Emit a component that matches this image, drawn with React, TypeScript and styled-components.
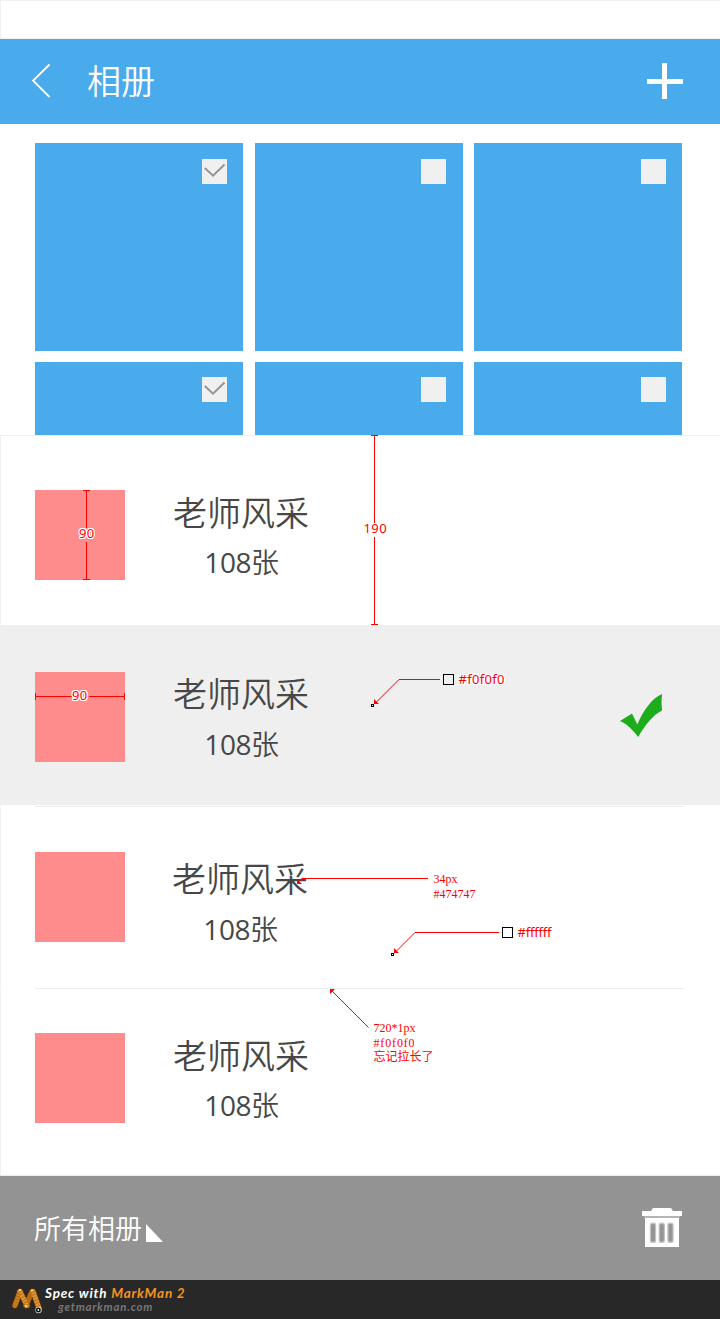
import React from "react";
import styled, { createGlobalStyle } from "styled-components";

const GlobalStyle = createGlobalStyle`
  * { box-sizing: border-box; }
  body { margin: 0; background: #ffffff; }
`;

const BLUE = "#49abeb";
const LINE = "#f0f0f0";
const RED = "#ff0000";

const Page = styled.main`
  position: relative;
  width: 720px;
  height: 1319px;
  overflow: hidden;
  display: flex;
  flex-direction: column;
  font-family: "Noto Sans", "Noto Sans CJK SC", sans-serif;
  color: #474747;
`;

const StatusBar = styled.div`
  flex: none;
  height: 39px;
  border: 1px solid ${LINE};
  border-right: none;
`;

const Header = styled.header`
  flex: none;
  height: 85px;
  padding: 0 37px 1px 32px;
  display: flex;
  align-items: center;
  background: ${BLUE};
`;

const HeaderTitle = styled.h1`
  margin: 0 auto 3px 36px;
  font-family: "Noto Sans CJK SC", sans-serif;
  font-size: 34px;
  line-height: 50px;
  font-weight: 350;
  color: #ffffff;
`;

const Gallery = styled.section`
  flex: none;
  height: 311px;
  overflow: hidden;
  padding: 19px 38px 0 35px;
  display: grid;
  grid-template-columns: 208px 208px 208px;
  grid-auto-rows: 208px;
  justify-content: space-between;
  row-gap: 11px;
`;

const Tile = styled.div<{ $top: number; $right: number }>`
  display: flex;
  justify-content: flex-end;
  align-items: flex-start;
  padding: ${(p) => p.$top}px ${(p) => p.$right}px 0 0;
  background: ${BLUE};
`;

const CheckBox = styled.span`
  width: 25px;
  height: 25px;
  background: ${LINE};
  svg { display: block; }
`;

const AlbumList = styled.section`
  flex: none;
  height: 741px;
  display: flex;
  flex-direction: column;
  border-bottom: 1px solid #ebebeb;
`;

const AlbumRow = styled.article<{ $height: number; $selected?: boolean; $topLine?: boolean }>`
  flex: none;
  height: ${(p) => p.$height}px;
  display: flex;
  align-items: flex-start;
  padding-left: ${(p) => (p.$selected ? 35 : 34)}px;
  background: ${(p) => (p.$selected ? "#efefef" : "#ffffff")};
  border-left: ${(p) => (p.$selected ? "none" : `1px solid ${LINE}`)};
  box-shadow: ${(p) => (p.$topLine ? `inset 0 1px 0 ${LINE}` : "none")};
`;

const Divider = styled.div`
  flex: none;
  height: 1px;
  margin: 0 36px 0 35px;
  background: #ececec;
`;

const Thumb = styled.div<{ $top: number }>`
  flex: none;
  width: 90px;
  height: 90px;
  margin-top: ${(p) => p.$top}px;
  background: #ff8c8c;
`;

const AlbumText = styled.div<{ $top: number; $left: number }>`
  width: 136px;
  margin: ${(p) => p.$top}px 0 0 ${(p) => p.$left}px;
  text-align: center;
`;

const AlbumName = styled.h2`
  margin: 0;
  font-size: 34px;
  line-height: 50px;
  font-weight: 350;
  white-space: nowrap;
`;

const AlbumCount = styled.p<{ $height: number }>`
  margin: -1px 0 0 1px;
  font-size: 28px;
  font-weight: 350;
  line-height: ${(p) => p.$height}px;
  letter-spacing: -0.4px;
`;

const CountNumber = styled.span`
  font-family: "Open Sans", "Noto Sans", sans-serif;
  font-weight: 400;
`;

const SelectedMark = styled.div`
  margin: 69px 57px 0 auto;
  svg { display: block; }
`;

const Toolbar = styled.footer`
  flex: none;
  height: 104px;
  padding: 0 38px 1px 34px;
  display: flex;
  align-items: center;
  background: #939393;
`;

const AlbumPicker = styled.div`
  display: flex;
  align-items: flex-end;
  margin-right: auto;
  font-family: "Noto Sans CJK SC", sans-serif;
  font-size: 27px;
  line-height: 40px;
  font-weight: 350;
  color: #ffffff;
  svg { margin: 0 0 6px 4px; }
`;

const Brand = styled.div`
  flex: none;
  height: 39px;
  display: flex;
  padding-left: 11px;
  background: #282828;
  font-family: Lato, "Open Sans", sans-serif;
  font-style: italic;
  font-weight: 700;
`;

const BrandText = styled.div`
  margin: 7px 0 0 2px;
`;

const BrandName = styled.div`
  font-size: 13.5px;
  line-height: 13px;
  letter-spacing: 0.8px;
  white-space: nowrap;
  color: #ffffff;
  em { color: #f7941d; }
`;

const BrandSite = styled.div`
  margin-left: 13px;
  font-size: 11.5px;
  line-height: 13px;
  letter-spacing: 0.75px;
  color: #777777;
`;

const Overlay = styled.div`
  position: absolute;
  inset: 0;
  pointer-events: none;
  > svg { display: block; }
`;

const Measure = styled.span<{ $x: number; $y: number; $spacing?: number }>`
  position: absolute;
  left: ${(p) => p.$x}px;
  top: ${(p) => p.$y}px;
  font-family: "Noto Sans", sans-serif;
  font-size: 13px;
  line-height: 16px;
  letter-spacing: ${(p) => p.$spacing ?? 0}px;
  color: ${RED};
  text-shadow: 1px 0 #fff, -1px 0 #fff, 0 1px #fff, 0 -1px #fff, 1px 1px #fff, -1px -1px #fff, 1px -1px #fff, -1px 1px #fff;
`;

const Note = styled.div<{ $x: number; $y: number }>`
  position: absolute;
  left: ${(p) => p.$x}px;
  top: ${(p) => p.$y}px;
  font-family: "Liberation Serif", "Noto Sans CJK SC", serif;
  font-size: 12px;
  line-height: 14.5px;
  white-space: nowrap;
  color: ${RED};
`;

const NoteLine = styled.div<{ $spacing?: number }>`
  height: 14.5px;
  letter-spacing: ${(p) => p.$spacing ?? 0}px;
`;

const tiles = [
  { checked: true, top: 16, right: 16 },
  { checked: false, top: 16, right: 17 },
  { checked: false, top: 16, right: 16 },
  { checked: true, top: 15, right: 16 },
  { checked: false, top: 15, right: 17 },
  { checked: false, top: 15, right: 16 },
];

interface Album {
  height: number;
  thumbTop: number;
  textTop: number;
  textLeft: number;
  countHeight: number;
  selected?: boolean;
  topLine?: boolean;
  dividerBefore?: boolean;
}

const albums: Album[] = [
  { height: 190, thumbTop: 55, textTop: 53, textLeft: 48, countHeight: 50, topLine: true },
  { height: 180, thumbTop: 47, textTop: 44, textLeft: 48, countHeight: 52, selected: true },
  { height: 181, thumbTop: 45, textTop: 47, textLeft: 47, countHeight: 52, dividerBefore: true },
  { height: 186, thumbTop: 44, textTop: 42, textLeft: 48, countHeight: 50, dividerBefore: true },
];

const TickIcon = () => (
  <svg width="25" height="25" fill="none" stroke="#959595" strokeWidth="2">
    <path d="M2.8 9 L11 16.7 L22.5 5.5" />
  </svg>
);

const BrandLogo = () => (
  <svg width="32" height="39" fill="none" strokeLinecap="round">
    <path d="M4 25.5 L9 11.5 M9 11.5 L16 25.5 M15 25.5 L21 11.5 M22 11.5 L28 28" stroke="#5b2f08" strokeWidth="6.5" />
    <path d="M4 25.5 L9 11.5" stroke="#c9801c" strokeWidth="5" />
    <path d="M15 25.5 L21 11.5" stroke="#b86f14" strokeWidth="5" />
    <path d="M9 11.5 L16 25.5 M22 11.5 L28 28" stroke="#dc9430" strokeWidth="5" />
    <path d="M9 11.5 L16 25.5 M22 11.5 L28 28 M4 25.5 L9 11.5 M15 25.5 L21 11.5" stroke="#a5621a" strokeWidth="5" strokeDasharray="0.6 2.4" strokeLinecap="butt" />
    <g fill="#ffe27a">
      <circle cx="9" cy="10" r="1.1" />
      <circle cx="21" cy="10.5" r="1.1" />
      <circle cx="15" cy="26" r="1.1" />
    </g>
    <circle cx="27.5" cy="30" r="3.2" fill="#e4e4e4" />
    <circle cx="27.3" cy="30.1" r="2.5" fill="#111111" />
    <circle cx="27.3" cy="30" r="0.9" fill="#ffffff" />
  </svg>
);

const App = () => (
  <>
    <GlobalStyle />
    <Page>
      <StatusBar />
      <Header>
        <svg width="19" height="36" fill="none" stroke="#fff" strokeWidth="1.8">
          <path d="M17.5 1.5 L1.2 17.7 L17.5 34" />
        </svg>
        <HeaderTitle>相册</HeaderTitle>
        <svg width="36" height="36" fill="#fff" shapeRendering="crispEdges">
          <path d="M15 0h5v16h16v5H20v15h-5V21H0v-5h15z" />
        </svg>
      </Header>
      <Gallery>
        {tiles.map((t, i) => (
          <Tile key={i} $top={t.top} $right={t.right}>
            <CheckBox>{t.checked && <TickIcon />}</CheckBox>
          </Tile>
        ))}
      </Gallery>
      <AlbumList>
        {albums.map((a, i) => (
          <React.Fragment key={i}>
            {i === 2 && <AlbumRow as="div" $height={1} />}
            {a.dividerBefore && <Divider />}
            <AlbumRow $height={a.height} $selected={a.selected} $topLine={a.topLine}>
              <Thumb $top={a.thumbTop} />
              <AlbumText $top={a.textTop} $left={a.textLeft}>
                <AlbumName>老师风采</AlbumName>
                <AlbumCount $height={a.countHeight}>
                  <CountNumber>108</CountNumber>张
                </AlbumCount>
              </AlbumText>
              {a.selected && (
                <SelectedMark>
                  <svg width="43" height="44" fill="#1cac1c">
                    <path d="M0 27 L12 19.5 L17.3 30.5 C23 17 32 4 42 0 L41.5 8 L42 16.5 C33 21 25 31 18.2 43 C13 36 7 30 0 27Z" />
                  </svg>
                </SelectedMark>
              )}
            </AlbumRow>
          </React.Fragment>
        ))}
      </AlbumList>
      <Toolbar>
        <AlbumPicker>
          所有相册
          <svg width="17" height="18" fill="#fff">
            <path d="M0 0 L17 18 H0Z" />
          </svg>
        </AlbumPicker>
        <svg width="40" height="39">
          <path d="M11 0H29L31 3H40V8H0V3H9Z" fill="#fff" />
          <path d="M3 10H37V39H3Z" fill="#fff" />
          <path d="M2 9H38" stroke="#b5b5b5" strokeWidth="2" />
          <g fill="#c4c4c4">
            <rect x="7.8" y="14.5" width="6.4" height="20.5" rx="2.5" />
            <rect x="16.6" y="14.5" width="6.4" height="20.5" rx="2.5" />
            <rect x="25.3" y="14.5" width="6.4" height="20.5" rx="2.5" />
          </g>
          <g fill="#959595">
            <rect x="9" y="16" width="4" height="17.5" rx="1.5" />
            <rect x="17.8" y="16" width="4" height="17.5" rx="1.5" />
            <rect x="26.5" y="16" width="4" height="17.5" rx="1.5" />
          </g>
        </svg>
      </Toolbar>
      <Brand>
        <BrandLogo />
        <BrandText>
          <BrandName>Spec with <em>MarkMan 2</em></BrandName>
          <BrandSite>getmarkman.com</BrandSite>
        </BrandText>
      </Brand>

      <Overlay>
        <svg width="720" height="1319" fill="none" stroke={RED}>
          <g shapeRendering="crispEdges">
            <path d="M83 490.5H90 M83 579.5H90 M86.5 490V528 M86.5 542V580" />
            <path d="M371 435.5H378 M371 624.5H378 M374.5 435V523 M374.5 537V625" />
            <path d="M35.5 693V700 M124.5 693V700 M35 696.5H72 M89 696.5H125" />
            <path d="M399 679.5H440 M415 932.5H499 M302 878.5H428" />
          </g>
          <path d="M399 679.5L375 703.5 M415 932.5L395 952.5 M332 991L368.5 1027.5 M302 878.5L298 882" strokeWidth="1" />
          <g fill={RED} stroke="none">
            <path d="M374 699V704H379Z M394 948V953H399Z M330 989H335L330 994Z M297 879V884H302Z" />
          </g>
          <g stroke="#000" shapeRendering="crispEdges">
            <rect x="443.5" y="674.5" width="10" height="10" />
            <rect x="502.5" y="927.5" width="10" height="10" fill="#fff" />
            <rect x="371.5" y="704.5" width="2" height="2" fill="#fff" />
            <rect x="391.5" y="953.5" width="2" height="2" fill="#fff" />
          </g>
        </svg>
        <Measure $x={79} $y={525} $spacing={0.4}>90</Measure>
        <Measure $x={363.5} $y={520} $spacing={0.4}>190</Measure>
        <Measure $x={72} $y={687} $spacing={0.4}>90</Measure>
        <Measure $x={458.5} $y={671} $spacing={0.3}>#f0f0f0</Measure>
        <Measure $x={517.5} $y={924} $spacing={-0.2}>#ffffff</Measure>
        <Note $x={433.5} $y={872}>
          <NoteLine>34px</NoteLine>
          <NoteLine>#474747</NoteLine>
        </Note>
        <Note $x={373.5} $y={1021}>
          <NoteLine>720*1px</NoteLine>
          <NoteLine $spacing={0.85}>#f0f0f0</NoteLine>
          <NoteLine>忘记拉长了</NoteLine>
        </Note>
      </Overlay>
    </Page>
  </>
);

export default App;
